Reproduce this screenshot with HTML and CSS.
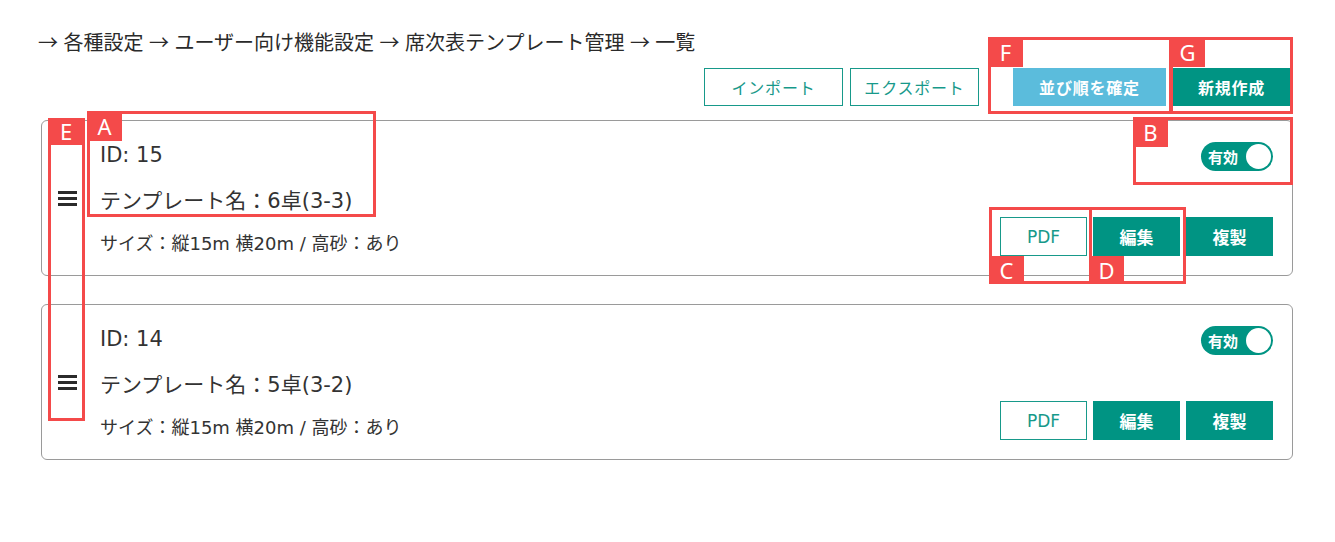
FILE: index.html
```html
<!DOCTYPE html>
<html lang="ja">
<head>
<meta charset="utf-8">
<title>席次表テンプレート管理</title>
<link rel="stylesheet" href="styles.css">
</head>
<body>
<div class="page">
  <div class="breadcrumb">→ 各種設定 → ユーザー向け機能設定 → 席次表テンプレート管理 → 一覧</div>
  <div class="toolbar">
    <button class="btn btn-outline btn-import">インポート</button>
    <button class="btn btn-outline btn-export">エクスポート</button>
    <button class="btn btn-sort">並び順を確定</button>
    <button class="btn btn-fill btn-new">新規作成</button>
  </div>

  <div class="card">
    <div class="handle">
      <svg width="19" height="15" viewBox="0 0 19 15"><rect x="0" y="0" width="19" height="3" fill="#2b2b2b"/><rect x="0" y="6" width="19" height="3" fill="#2b2b2b"/><rect x="0" y="12" width="19" height="3" fill="#2b2b2b"/></svg>
    </div>
    <div class="info">
      <div class="row row-id">ID: 15</div>
      <div class="row row-name">テンプレート名：6卓(3-3)</div>
      <div class="row row-size">サイズ：縦15m 横20m / 高砂：あり</div>
    </div>
    <div class="side">
      <div class="toggle"><span class="toggle-label">有効</span><span class="knob"></span></div>
      <div class="actions">
        <button class="btn btn-outline btn-sm">PDF</button>
        <button class="btn btn-fill btn-sm">編集</button>
        <button class="btn btn-fill btn-sm">複製</button>
      </div>
    </div>
  </div>

  <div class="card">
    <div class="handle">
      <svg width="19" height="15" viewBox="0 0 19 15"><rect x="0" y="0" width="19" height="3" fill="#2b2b2b"/><rect x="0" y="6" width="19" height="3" fill="#2b2b2b"/><rect x="0" y="12" width="19" height="3" fill="#2b2b2b"/></svg>
    </div>
    <div class="info">
      <div class="row row-id">ID: 14</div>
      <div class="row row-name">テンプレート名：5卓(3-2)</div>
      <div class="row row-size">サイズ：縦15m 横20m / 高砂：あり</div>
    </div>
    <div class="side">
      <div class="toggle"><span class="toggle-label">有効</span><span class="knob"></span></div>
      <div class="actions">
        <button class="btn btn-outline btn-sm">PDF</button>
        <button class="btn btn-fill btn-sm">編集</button>
        <button class="btn btn-fill btn-sm">複製</button>
      </div>
    </div>
  </div>

  <div class="anno anno-a"><span class="tag">A</span></div>
  <div class="anno anno-b"><span class="tag">B</span></div>
  <div class="anno anno-c"><span class="tag tag-bottom">C</span></div>
  <div class="anno anno-d"><span class="tag tag-bottom">D</span></div>
  <div class="anno anno-e"><span class="tag tag-full">E</span></div>
  <div class="anno anno-f"><span class="tag">F</span></div>
  <div class="anno anno-g"><span class="tag">G</span></div>
</div>
</body>
</html>
```

FILE: styles.css
```css
* { box-sizing: border-box; }
html, body { margin: 0; padding: 0; background: #fff; }
body {
  font-family: "Noto Sans CJK JP", "Noto Sans", sans-serif;
  color: #333;
}
.page {
  position: relative;
  width: 1335px;
  height: 542px;
  padding: 28px 42px 0 41px;
}
.breadcrumb {
  font-size: 20px;
  line-height: 28px;
  height: 28px;
  margin-left: -3px;
  word-spacing: 1px;
  color: #2a2a2a;
}
.toolbar {
  display: flex;
  justify-content: flex-end;
  gap: 7px;
  margin-top: 12px;
  padding-right: 3px;
  height: 38px;
  margin-bottom: 14px;
}
.btn {
  font-family: "Noto Sans CJK JP", "Noto Sans", sans-serif;
  font-size: 16px;
  letter-spacing: 0.8px;
  height: 38px;
  border: 0;
  padding: 0;
  cursor: pointer;
  display: inline-flex;
  align-items: center;
  justify-content: center;
}
.btn-outline {
  background: #fff;
  border: 1.5px solid #17998a;
  color: #17998a;
}
.btn-fill {
  background: #009483;
  color: #fff;
  font-weight: 700;
}
.btn-import { width: 139px; }
.btn-export { width: 129px; }
.btn-sort {
  width: 153px;
  background: #5bbcdc;
  color: #fff;
  font-weight: 700;
  margin-left: 27px;
}
.btn-new { width: 117px; }

.card {
  display: flex;
  height: 156px;
  border: 1px solid #9a9a9a;
  border-radius: 6px;
  margin-bottom: 28px;
}
.handle {
  width: 58px;
  display: flex;
  align-items: center;
  padding-left: 16px;
}
.handle svg { display: block; }
.info {
  flex: 1;
  padding-top: 12px;
  font-family: "DejaVu Sans", "Noto Sans CJK JP", sans-serif;
}
.row {
  display: flex;
  align-items: center;
  color: #333;
  white-space: nowrap;
}
.row-id { height: 44px; font-size: 21px; }
.row-name { height: 44px; font-size: 21px; }
.row-size { height: 42px; font-size: 18px; }
.side {
  display: flex;
  flex-direction: column;
  align-items: flex-end;
  justify-content: space-between;
  padding: 21px 19px 19px 0;
}
.toggle {
  width: 72px;
  height: 29px;
  border-radius: 15px;
  background: #009483;
  display: flex;
  align-items: center;
  justify-content: space-between;
  padding: 0 2px 0 7px;
}
.toggle-label {
  color: #fff;
  font-size: 15px;
  font-weight: 700;
  line-height: 1;
}
.knob {
  width: 25px;
  height: 25px;
  border-radius: 50%;
  background: #fff;
}
.actions {
  display: flex;
  gap: 6px;
}
.btn-sm {
  width: 87px;
  height: 39px;
  font-size: 17px;
  letter-spacing: 0;
  font-family: "DejaVu Sans", "Noto Sans CJK JP", sans-serif;
}

/* annotation overlays */
.anno {
  position: absolute;
  border: 3px solid #f44a4a;
}
.tag {
  position: absolute;
  top: -3px;
  left: -3px;
  width: 35px;
  height: 30px;
  background: #f44a4a;
  color: #fff;
  font-family: "Noto Sans", sans-serif;
  font-size: 22px;
  line-height: 30px;
  text-align: center;
}
.tag-bottom { top: auto; bottom: -3px; height: 28px; line-height: 28px; }
.tag-full { width: 36px; height: 27px; line-height: 27px; }
.anno-a { left: 87px; top: 111px; width: 289px; height: 106px; }
.anno-b { left: 1133px; top: 117px; width: 160px; height: 68px; }
.anno-c { left: 989px; top: 207px; width: 103px; height: 77px; }
.anno-d { left: 1089px; top: 207px; width: 97px; height: 77px; }
.anno-e { left: 48px; top: 118px; width: 37px; height: 303px; }
.anno-f { left: 988px; top: 37px; width: 184px; height: 77px; }
.anno-g { left: 1170px; top: 37px; width: 123px; height: 77px; }
```
